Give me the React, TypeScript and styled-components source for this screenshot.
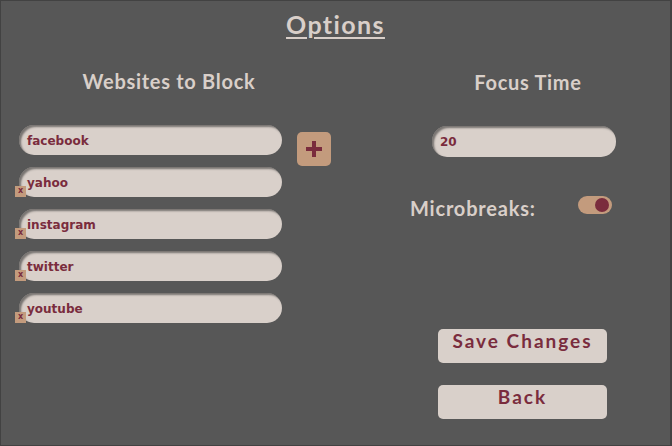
import React from "react";
import styled, { createGlobalStyle } from "styled-components";

const GlobalStyle = createGlobalStyle`
  html, body { margin: 0; padding: 0; background: #575757; }
  * { box-sizing: border-box; }
`;

const LIGHT = "#d9cfc9";
const MAROON = "#7a2c3d";
const TAN = "#c39b7d";
const HEAD_FONT = `"Lato", "Open Sans", sans-serif`;
const FIELD_FONT = `"DejaVu Sans", "Verdana", sans-serif`;

const Page = styled.div`
  width: 672px;
  height: 446px;
  background: #575757;
  border: 1px solid #424242;
  border-right-width: 2px;
  padding: 8px 0 0 18px;
  font-family: ${HEAD_FONT};
`;

const Title = styled.h1`
  margin: 0 0 0 -18px;
  text-align: center;
  font-size: 25px;
  line-height: 30px;
  font-weight: 700;
  letter-spacing: 1.4px;
  color: ${LIGHT};
  text-decoration: underline;
  text-underline-offset: 3px;
  text-decoration-thickness: 2px;
`;

const Columns = styled.div`
  display: flex;
  gap: 91px;
  margin-top: 30px;
`;

const LeftColumn = styled.div`
  width: 300px;
  flex-shrink: 0;
  display: flex;
  flex-direction: column;
`;

const RightColumn = styled.div`
  width: 236px;
  flex-shrink: 0;
  display: flex;
  flex-direction: column;
`;

const Heading = styled.h2<{ $offset?: number }>`
  margin: ${(p) => p.$offset ?? 0}px 0 0 0;
  text-align: center;
  font-size: 20px;
  line-height: 24px;
  font-weight: 700;
  letter-spacing: 0.7px;
  color: ${LIGHT};
`;

const SiteList = styled.div`
  margin-top: 32px;
  display: flex;
  flex-direction: column;
  gap: 12px;
`;

const SiteRow = styled.div`
  position: relative;
  display: flex;
  align-items: flex-start;
  gap: 15px;
  height: 30px;
`;

const Field = styled.div<{ $width: number }>`
  width: ${(p) => p.$width}px;
  flex-shrink: 0;
  height: 30px;
  border-radius: 15px;
  background: #d9d0ca;
  box-shadow: inset 2px 2px 2px rgba(40, 40, 40, 0.55);
  padding: 1px 8px 0;
  display: flex;
  align-items: center;
  font-family: ${FIELD_FONT};
  font-weight: 700;
  font-size: 12px;
  color: ${MAROON};
`;

const RemoveBadge = styled.span`
  position: absolute;
  left: -4px;
  top: 19px;
  width: 11px;
  height: 11px;
  background: ${TAN};
  color: ${MAROON};
  font-family: ${FIELD_FONT};
  font-size: 8px;
  font-weight: 700;
  line-height: 10px;
  text-align: center;
`;

const AddButton = styled.button`
  width: 34px;
  height: 34px;
  flex-shrink: 0;
  margin-top: 7px;
  border: none;
  border-radius: 5px;
  background: ${TAN};
  display: flex;
  align-items: center;
  justify-content: center;
  padding: 0;
`;

const FocusField = styled(Field)`
  margin: 32px 0 0 22px;
  height: 31px;
`;

const MicroRow = styled.div`
  margin-top: 33px;
  display: flex;
  align-items: center;
  justify-content: space-between;
  width: 202px;
`;

const MicroLabel = styled.span`
  font-size: 20px;
  font-weight: 700;
  letter-spacing: 0.8px;
  color: ${LIGHT};
  line-height: 24px;
  padding-top: 6px;
`;

const Toggle = styled.div`
  width: 34px;
  height: 18px;
  border-radius: 9px;
  background: ${TAN};
  display: flex;
  align-items: center;
  justify-content: flex-end;
  padding-right: 3px;
`;

const Knob = styled.div`
  width: 14px;
  height: 14px;
  border-radius: 50%;
  background: ${MAROON};
`;

const ActionButton = styled.button<{ $top: number }>`
  margin: ${(p) => p.$top}px 0 0 28px;
  width: 169px;
  height: 34px;
  border: none;
  border-radius: 5px;
  background: #d9d0ca;
  color: ${MAROON};
  font-family: ${HEAD_FONT};
  font-weight: 700;
  font-size: 19px;
  letter-spacing: 2px;
  line-height: 22px;
  padding: 1px 0 11px;
  text-align: center;
`;

const sites = ["facebook", "yahoo", "instagram", "twitter", "youtube"];

export default function App() {
  return (
    <>
      <GlobalStyle />
      <Page>
        <Title>Options</Title>
        <Columns>
          <LeftColumn>
            <Heading>Websites to Block</Heading>
            <SiteList>
              {sites.map((s, i) => (
                <SiteRow key={s}>
                  <Field $width={263}>{s}</Field>
                  {i === 0 ? (
                    <AddButton aria-label="add">
                      <svg width="16" height="16" viewBox="0 0 16 16">
                        <rect x="6" y="0" width="4" height="16" fill={MAROON} />
                        <rect x="0" y="6" width="16" height="4" fill={MAROON} />
                      </svg>
                    </AddButton>
                  ) : (
                    <RemoveBadge>x</RemoveBadge>
                  )}
                </SiteRow>
              ))}
            </SiteList>
          </LeftColumn>
          <RightColumn>
            <Heading $offset={1}>Focus Time</Heading>
            <FocusField $width={184}>20</FocusField>
            <MicroRow>
              <MicroLabel>Microbreaks:</MicroLabel>
              <Toggle>
                <Knob />
              </Toggle>
            </MicroRow>
            <ActionButton $top={109}>Save Changes</ActionButton>
            <ActionButton $top={22}>Back</ActionButton>
          </RightColumn>
        </Columns>
      </Page>
    </>
  );
}
